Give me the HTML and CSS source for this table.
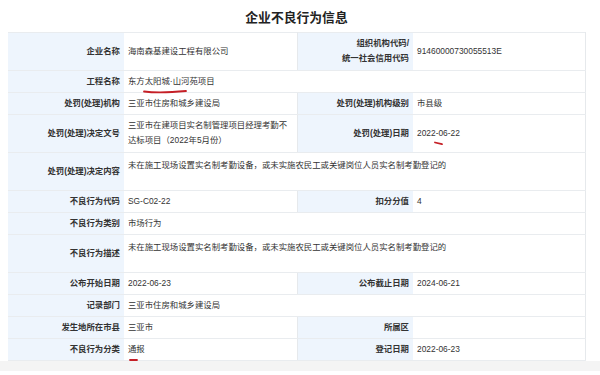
FILE: index.html
```html
<!DOCTYPE html>
<html lang="zh-CN">
<head>
<meta charset="utf-8">
<title>企业不良行为信息</title>
<link rel="stylesheet" href="styles.css">
</head>
<body>
<div class="page">
  <h1 class="title">企业不良行为信息</h1>
  <table class="info">
    <colgroup>
      <col class="c-label"><col class="c-val"><col class="c-label"><col class="c-val2">
    </colgroup>
    <tbody>
      <tr class="two">
        <th>企业名称</th>
        <td>海南森基建设工程有限公司</td>
        <th>组织机构代码/<br>统一社会信用代码</th>
        <td>91460000730055513E</td>
      </tr>
      <tr>
        <th>工程名称</th>
        <td colspan="3">东方<span class="mark">太阳城·山<svg class="stroke s1" width="44" height="5" viewBox="0 0 44 5"><path d="M1 2.5 C 10 3.6, 28 3.4, 43 2" /></svg></span>河苑项目</td>
      </tr>
      <tr>
        <th>处罚(处理)机构</th>
        <td>三亚市住房和城乡建设局</td>
        <th>处罚(处理)机构级别</th>
        <td>市县级</td>
      </tr>
      <tr class="two">
        <th>处罚(处理)决定文号</th>
        <td>三亚市在建项目实名制管理项目经理考勤不达标项目（2022年5月份）</td>
        <th>处罚(处理)日期</th>
        <td><span class="mark">2022-06-22<svg class="stroke s2" width="9" height="5" viewBox="0 0 9 5"><path d="M1 1.5 L 8 3.2" /></svg></span></td>
      </tr>
      <tr class="two">
        <th>处罚(处理)决定内容</th>
        <td colspan="3" class="top">未在施工现场设置实名制考勤设备，或未实施农民工或关键岗位人员实名制考勤登记的</td>
      </tr>
      <tr>
        <th>不良行为代码</th>
        <td>SG-C02-22</td>
        <th>扣分分值</th>
        <td>4</td>
      </tr>
      <tr>
        <th>不良行为类别</th>
        <td colspan="3">市场行为</td>
      </tr>
      <tr class="two">
        <th>不良行为描述</th>
        <td colspan="3" class="top">未在施工现场设置实名制考勤设备，或未实施农民工或关键岗位人员实名制考勤登记的</td>
      </tr>
      <tr>
        <th>公布开始日期</th>
        <td>2022-06-23</td>
        <th>公布截止日期</th>
        <td>2024-06-21</td>
      </tr>
      <tr>
        <th>记录部门</th>
        <td colspan="3">三亚市住房和城乡建设局</td>
      </tr>
      <tr>
        <th>发生地所在市县</th>
        <td>三亚市</td>
        <th>所属区</th>
        <td></td>
      </tr>
      <tr>
        <th>不良行为分类</th>
        <td><span class="mark">通报<svg class="stroke s3" width="9" height="4" viewBox="0 0 9 4"><path d="M1 2 L 8 2" /></svg></span></td>
        <th>登记日期</th>
        <td>2022-06-23</td>
      </tr>
    </tbody>
  </table>
</div>
<div class="footer"></div>
</body>
</html>
```
FILE: styles.css
```css
html, body {
  margin: 0;
  padding: 0;
  background: #ffffff;
}
body {
  font-family: "Liberation Sans", "Noto Sans CJK SC", sans-serif;
  color: #333333;
  width: 600px;
  height: 375px;
  overflow: hidden;
}
.page {
  padding: 0 0 0 8px;
  width: 577px;
}
.title {
  margin: 0;
  height: 32px;
  padding-top: 3px;
  box-sizing: border-box;
  line-height: 29px;
  font-size: 12.8px;
  font-weight: bold;
  text-align: center;
  color: #222222;
}
.info {
  width: 577px;
  border-collapse: collapse;
  table-layout: fixed;
  font-size: 8.4px;
}
.c-label { width: 116px; }
.c-val { width: 173px; }
.c-val2 { width: 172px; }
.info th,
.info td {
  border-top: 1px solid #e9ecef;
  border-bottom: 1px solid #e9ecef;
  padding: 3px 4px;
  line-height: 15px;
  height: 15px;
  vertical-align: middle;
}
.info tr.two th,
.info tr.two td {
  height: 30px;
  padding-top: 3px;
  padding-bottom: 4px;
}
.info th {
  background: #eef5fd;
  text-align: right;
  font-weight: bold;
  color: #333333;
}
.info td {
  background: #ffffff;
  text-align: left;
  font-weight: normal;
  border-right: 1px solid #e6e9ec;
}
.info tr.two td.top {
  vertical-align: top;
  padding-top: 5px;
  padding-bottom: 2px;
}
.mark {
  position: relative;
}
.stroke {
  position: absolute;
  overflow: visible;
}
.stroke path {
  fill: none;
  stroke: #c51f26;
  stroke-width: 1.8;
  stroke-linecap: round;
}
.s1 { left: -2px; top: 13px; }
.s2 { left: 17px; top: 13px; }
.s3 { left: 1px; top: 14px; }
.footer {
  height: 10px;
  margin-top: 0;
  background: #f4f4f4;
}
```
